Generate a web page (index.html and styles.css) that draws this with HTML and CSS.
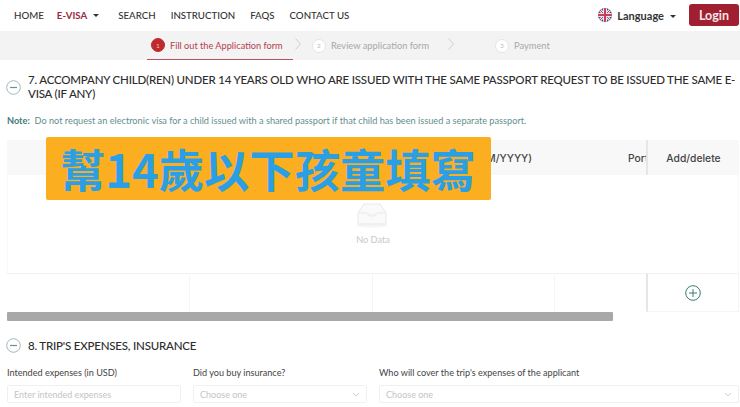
FILE: index.html
```html
<!DOCTYPE html>
<html lang="en">
<head>
<meta charset="utf-8">
<title>E-Visa application</title>
<link rel="stylesheet" href="styles.css">
</head>
<body>
<header class="topbar">
  <nav class="nav">
    <a>HOME</a>
    <a class="active">E-VISA <span class="caret caret-nav"></span></a>
    <a>SEARCH</a>
    <a>INSTRUCTION</a>
    <a>FAQS</a>
    <a>CONTACT US</a>
  </nav>
  <div class="lang">
    <svg class="flag" viewBox="0 0 14 14" width="14" height="14">
      <clipPath id="c"><circle cx="7" cy="7" r="7"/></clipPath>
      <g clip-path="url(#c)">
        <rect width="14" height="14" fill="#3b4a86"/>
        <path d="M0 0L14 14M14 0L0 14" stroke="#e8e4ea" stroke-width="3"/>
        <path d="M0 0L14 14M14 0L0 14" stroke="#c2425a" stroke-width="1"/>
        <path d="M7 0V14M0 7H14" stroke="#e8e4ea" stroke-width="4"/>
        <path d="M7 0V14M0 7H14" stroke="#c2425a" stroke-width="2"/>
      </g>
    </svg>
    <span>Language</span>
    <span class="caret caret-lang"></span>
  </div>
  <button class="login">Login</button>
</header>

<div class="steps">
  <div class="step current"><span class="num">1</span>Fill out the Application form</div>
  <svg class="chev" viewBox="0 0 6 12" width="6" height="12"><path d="M0.5 0.5L5.5 6L0.5 11.5" fill="none" stroke="#cfcfcf"/></svg>
  <div class="step second"><span class="num">2</span>Review application form</div>
  <svg class="chev" viewBox="0 0 6 12" width="6" height="12"><path d="M0.5 0.5L5.5 6L0.5 11.5" fill="none" stroke="#cfcfcf"/></svg>
  <div class="step third"><span class="num">3</span>Payment</div>
</div>

<main>
  <section class="head head-7">
    <svg class="toggle" viewBox="0 0 15 15" width="15" height="15"><circle cx="7.5" cy="7.5" r="6.8" fill="none" stroke="#9dbab8"/><path d="M4 7.5H11" stroke="#6d8f8d" stroke-width="1.2"/></svg>
    <h2>7. ACCOMPANY CHILD(REN) UNDER 14 YEARS OLD WHO ARE ISSUED WITH THE SAME PASSPORT REQUEST TO BE ISSUED THE SAME E-VISA (IF ANY)</h2>
  </section>
  <p class="note"><b>Note:</b>&nbsp; Do not request an electronic visa for a child issued with a shared passport if that child has been issued a separate passport.</p>

  <div class="table">
    <div class="row thead">
      <div class="cell"></div>
      <div class="cell"></div>
      <div class="cell dob">Date of birth (DD/MM/YYYY)</div>
      <div class="cell port">Portrait photo</div>
      <div class="cell fixed">Add/delete</div>
    </div>
    <div class="empty">
      <svg viewBox="0 0 34 26" width="34" height="26">
        <ellipse cx="17" cy="23.5" rx="16" ry="2" fill="#f5f5f5"/>
        <path d="M3 11L9 2H25L31 11V22H3Z" fill="#fafafa" stroke="#e9e9e9"/>
        <path d="M3 11H12L14 14H20L22 11H31" fill="#f6f6f6" stroke="#e9e9e9"/>
      </svg>
      <span>No Data</span>
    </div>
    <div class="row tbody">
      <div class="cell"></div>
      <div class="cell"></div>
      <div class="cell"></div>
      <div class="cell"></div>
      <div class="cell fixed">
        <svg viewBox="0 0 16 16" width="16" height="16"><circle cx="8" cy="8" r="7.3" fill="none" stroke="#3f7a72"/><path d="M8 4V12M4 8H12" stroke="#3f7a72"/></svg>
      </div>
    </div>
  </div>
  <div class="scroll"><div class="thumb"></div></div>

  <section class="head head-8">
    <svg class="toggle" viewBox="0 0 15 15" width="15" height="15"><circle cx="7.5" cy="7.5" r="6.8" fill="none" stroke="#9dbab8"/><path d="M4 7.5H11" stroke="#6d8f8d" stroke-width="1.2"/></svg>
    <h2>8. TRIP'S EXPENSES, INSURANCE</h2>
  </section>

  <div class="fields">
    <div class="field">
      <label>Intended expenses (in USD)</label>
      <div class="input">Enter intended expenses</div>
    </div>
    <div class="field">
      <label>Did you buy insurance?</label>
      <div class="input">Choose one<svg viewBox="0 0 8 5" width="8" height="5"><path d="M1 1L4 4L7 1" fill="none" stroke="#cfcfcf"/></svg></div>
    </div>
    <div class="field">
      <label>Who will cover the trip's expenses of the applicant</label>
      <div class="input">Choose one<svg viewBox="0 0 8 5" width="8" height="5"><path d="M1 1L4 4L7 1" fill="none" stroke="#cfcfcf"/></svg></div>
    </div>
  </div>
</main>

<div class="banner">幫14歲以下孩童填寫</div>
</body>
</html>
```

FILE: styles.css
```css
* { box-sizing: border-box; }
html, body { margin: 0; height: 407px; overflow: hidden; background: #fff; }
body { font-family: "Lato", "Noto Sans", sans-serif; color: #333; position: relative; }

.topbar { height: 31px; display: flex; align-items: center; padding: 0 1px 1px 14px; background: #fff; }
.nav { display: flex; gap: 15px; font-size: 9.7px; font-weight: 500; color: #333; flex: 1; }
.nav a { white-space: nowrap; }
.nav .active { color: #9c2a3f; font-weight: 700; margin: 0 4px 0 -2px; }
.caret { display: inline-block; width: 0; height: 0; border-left: 3px solid transparent; border-right: 3px solid transparent; border-top: 3px solid #333; }
.caret-nav { margin-left: 4px; vertical-align: 2px; }
.lang { display: flex; align-items: center; gap: 5px; font-size: 11px; font-weight: 700; margin-right: 13px; }
.caret-lang { margin: 3px 0 0 1px; }
.flag { display: block; }
.login { width: 50px; height: 22px; border: 0; border-radius: 3px; background: #a01f30; color: #f6e6e8; font: 700 12.5px "Lato", sans-serif; padding: 0; }

.steps { height: 29px; background: #f3f3f3; display: flex; padding-left: 147px; font-size: 9.3px; color: #a8a8a8; }
.step { display: flex; align-items: center; gap: 5px; white-space: nowrap; height: 29px; }
.step.current { width: 146px; padding-left: 4px; color: #b5404f; font-size: 9.2px; border-bottom: 1px solid #b5505f; }
.step.second { margin-left: 11px; width: 134px; }
.step.third { margin-left: 41px; }
.num { width: 14px; height: 14px; border-radius: 50%; background: #fff; border: 1px solid #e5e5e5; color: #bbb; font-size: 6.5px; display: flex; align-items: center; justify-content: center; flex: none; }
.current .num { background: #bf2a2e; border-color: #bf2a2e; color: #f0c0c0; }
.chev { align-self: center; margin-left: 2px; margin-top: -3px; flex: none; }

.head { display: flex; align-items: center; gap: 7px; padding: 0 0 0 6px; }
.head h2 { margin: 0; font-size: 11.5px; letter-spacing: -0.2px; line-height: 14px; font-weight: 500; color: #2d2d2d; }
.toggle { flex: none; display: block; }
.head-7 { margin-top: 13px; }
.head-8 { margin-top: 17px; height: 15px; }
.note { margin: 14px 0 0 7px; font-size: 9.2px; line-height: 12px; color: #5f8f8d; white-space: nowrap; }
.note b { color: #3f7c7a; font-weight: 700; }

.table { margin: 13px 1px 0 7px; }
.row { display: grid; grid-template-columns: 183px 183px 182px 91px 1fr; }
.thead { height: 35px; background: #f8f8f8; font: 500 10.3px "Inter", sans-serif; color: #444; }
.thead .cell { display: flex; align-items: center; overflow: hidden; white-space: nowrap; }
.dob { padding-left: 18px; }
.port { padding-left: 73px; }
.fixed { border-left: 2px solid #e6e6e6; justify-content: center; display: flex; align-items: center; }
.thead .fixed { justify-content: center; }
.empty { height: 99px; display: flex; flex-direction: column; align-items: center; padding-top: 27px; gap: 6px; font-size: 9.2px; color: #c8c8c8; border-bottom: 1px solid #f2f2f2; border-left: 1px solid #f8f8f8; border-right: 1px solid #f8f8f8; }
.empty svg { display: block; margin-right: 3px; }
.tbody { height: 38px; }
.tbody .cell { border-right: 1px solid #f5f5f5; }
.tbody .cell:nth-child(4) { border-right: 0; }
.tbody .fixed { border-right: 1px solid #f5f5f5; border-bottom: 1px solid #f5f5f5; }

.scroll { margin-left: 7px; height: 9px; }
.thumb { width: 606px; height: 9px; background: #a8a8a8; border-radius: 1px; }

.fields { display: grid; grid-template-columns: 174px 174px 360px; column-gap: 12px; margin: 14px 0 0 7px; }
.field label { display: block; font-size: 9.1px; line-height: 12px; color: #444; white-space: nowrap; }
.input { margin-top: 6px; height: 18px; border: 1px solid #f0f0f0; border-radius: 2px; padding: 0 6px; font-size: 9px; color: #c4c4c4; display: flex; align-items: center; justify-content: space-between; }

.banner { position: absolute; left: 46px; top: 137px; width: 445px; height: 63px; background: #fbae20; border-radius: 2px; color: #2b9fe6; font: 700 45.3px/63px "Noto Sans CJK TC", "Liberation Sans", sans-serif; padding-left: 14px; white-space: nowrap; }
```
